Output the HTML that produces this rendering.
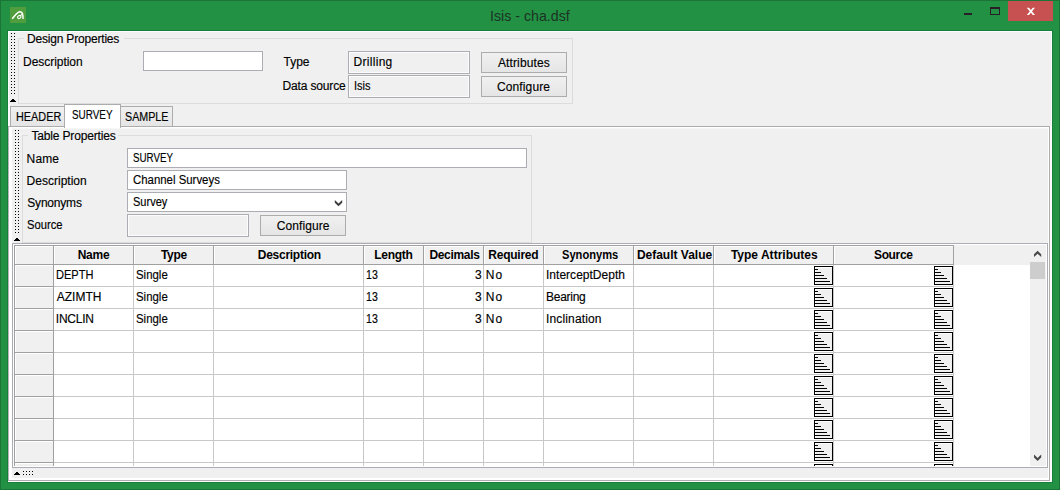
<!DOCTYPE html><html><head><meta charset="utf-8"><title>Isis - cha.dsf</title><style>
html,body{margin:0;padding:0;}
body{width:1060px;height:490px;overflow:hidden;background:#229143;position:relative;
 font-family:"Liberation Sans",sans-serif;font-size:12px;color:#000;}
div,span{position:absolute;box-sizing:border-box;}
.t{-webkit-text-stroke:0.15px #000;white-space:nowrap;line-height:14px;height:14px;font-size:12px;}
.b{font-weight:bold;}
.c{text-align:center;}
.r{text-align:right;}
.btn{border:1px solid #acacac;background:linear-gradient(#f2f2f2,#ebebeb 45%,#dddddd 55%,#cfcfcf);}
.btn2{border:1px solid #acacac;background:linear-gradient(#f0f0f0,#e5e5e5);}
.inp{border:1px solid #abadb3;background:#fff;}
.dis{border:1px solid #abadb3;background:#f0f0f0;box-shadow:inset 0 0 0 1px #fcfcfc;}
.ico{border:1px solid #000;background:#f0f0f0;width:19px;height:19px;box-shadow:inset 1px 1px 0 #fff;}
.ico i{position:absolute;left:0;height:1px;background:#000;display:block;}
</style></head><body>
<div style="left:0px;top:0px;width:1060px;height:490px;border:1px solid #1a7536;"></div>
<svg style="position:absolute;left:10px;top:7px" width="16" height="16" viewBox="0 0 16 16"><rect width="16" height="16" fill="#4f9d3c"/><path d="M2.6 11.3 C4.3 9 6.3 6.6 8.2 5.3 C9.5 4.6 11 4.7 12 5.7 C12.9 6.7 13 8.6 13.05 11.4" fill="none" stroke="#fff" stroke-width="1.45" stroke-linecap="round"/><ellipse cx="9.25" cy="10" rx="1.75" ry="1.4" transform="rotate(-25 9.25 10)" fill="none" stroke="#fff" stroke-width="1.15"/><path d="M10.7 9 C11.2 8.3 11.5 7.5 11.7 6.6" fill="none" stroke="#fff" stroke-width="1"/></svg>
<span class="t" style="left:489.75px;top:9px;transform:scaleX(0.9464);transform-origin:0 0;font-size:15px;color:#1c3325;-webkit-text-stroke:0;">Isis - cha.dsf</span>
<div style="left:964px;top:13px;width:8px;height:2px;background:#281e28;"></div>
<div style="left:990px;top:7px;width:10px;height:8px;border:1px solid #281e28;border-top-width:2px;"></div>
<div style="left:1008px;top:1px;width:45px;height:20px;background:#c75050;"></div>
<svg style="position:absolute;left:1026px;top:7px" width="10" height="9" viewBox="0 0 10 9"><path d="M0.8 0.8 L3 0.8 L9 8 L6.8 8 Z M6.8 0.8 L9 0.8 L3 8 L0.8 8 Z" fill="#fff"/></svg>
<div style="left:7px;top:30px;width:1046px;height:453px;background:#15803a;"></div>
<div style="left:8px;top:31px;width:1044px;height:451px;background:#f0f0f0;"></div>
<div style="left:8px;top:31px;width:1044px;height:1px;background:#fdfafd;"></div>
<div style="left:8px;top:31px;width:1px;height:95px;background:#fdfafd;"></div>
<div style="left:9px;top:104px;width:1px;height:22px;background:#fdfafd;"></div>
<div style="left:1051px;top:31px;width:1px;height:451px;background:#fdfafd;"></div>
<div style="left:1050px;top:126px;width:1px;height:356px;background:#fdfafd;"></div>
<div style="left:8px;top:481px;width:1044px;height:1px;background:#fdfafd;"></div>
<div style="left:11px;top:33px;width:1px;height:61px;background:repeating-linear-gradient(to bottom,#000 0,#000 1px,transparent 1px,transparent 3px);"></div>
<div style="left:14px;top:33px;width:1px;height:61px;background:repeating-linear-gradient(to bottom,#000 0,#000 1px,transparent 1px,transparent 3px);"></div>
<div style="left:12px;top:99px;width:2px;height:1px;background:#000;"></div>
<div style="left:11px;top:100px;width:4px;height:1px;background:#000;"></div>
<div style="left:10px;top:101px;width:6px;height:1px;background:#000;"></div>
<div style="left:18px;top:38px;width:555px;height:66px;border:1px solid #dcdcdc;"></div>
<div style="left:24px;top:37px;width:100px;height:3px;background:#f0f0f0;"></div>
<span class="t" style="left:27.0px;top:32px;letter-spacing:-0.19px;">Design Properties</span>
<span class="t" style="left:23.0px;top:55px;letter-spacing:-0.04px;">Description</span>
<div class="inp" style="left:143px;top:51px;width:120px;height:20px;"></div>
<span class="t" style="left:283.5px;top:55px;">Type</span>
<span class="t" style="left:282.5px;top:79px;letter-spacing:-0.15px;">Data source</span>
<div class="dis" style="left:348px;top:51px;width:122px;height:23px;"></div>
<div class="dis" style="left:348px;top:75px;width:122px;height:23px;"></div>
<span class="t" style="left:353.5px;top:55px;letter-spacing:0.3px;">Drilling</span>
<span class="t" style="left:353.59px;top:79px;transform:scaleX(0.9118);transform-origin:0 0;">Isis</span>
<div class="btn2" style="left:481px;top:52px;width:86px;height:21px;"></div>
<div class="btn2" style="left:481px;top:76px;width:86px;height:21px;"></div>
<span class="t" style="left:498.0px;top:56px;letter-spacing:0.11px;">Attributes</span>
<span class="t" style="left:497.0px;top:80px;letter-spacing:0.12px;">Configure</span>
<div style="left:8px;top:126px;width:1042px;height:355px;border:1px solid #acacac;border-left-color:#b9b4b9;background:#fff;"></div>
<div style="left:12px;top:128px;width:1036px;height:1px;background:#f7f7f7;"></div>
<div style="left:12px;top:129px;width:1036px;height:349px;background:#f0f0f0;"></div>
<div style="left:10px;top:106px;width:55px;height:20px;border:1px solid #acacac;border-bottom:none;background:linear-gradient(#f0f0f0,#e5e5e5);"></div>
<div style="left:120px;top:106px;width:53px;height:20px;border:1px solid #acacac;border-bottom:none;border-left:none;background:linear-gradient(#f0f0f0,#e5e5e5);"></div>
<div style="left:64px;top:104px;width:57px;height:24px;border:1px solid #acacac;border-bottom:none;background:#fff;"></div>
<span class="t" style="left:15.5px;top:110px;transform:scaleX(0.9042);transform-origin:0 0;">HEADER</span>
<span class="t" style="left:72.3px;top:108px;transform:scaleX(0.8245);transform-origin:0 0;">SURVEY</span>
<span class="t" style="left:125.2px;top:110px;transform:scaleX(0.8918);transform-origin:0 0;">SAMPLE</span>
<div style="left:15px;top:130px;width:1px;height:103px;background:repeating-linear-gradient(to bottom,#000 0,#000 1px,transparent 1px,transparent 3px);"></div>
<div style="left:18px;top:130px;width:1px;height:103px;background:repeating-linear-gradient(to bottom,#000 0,#000 1px,transparent 1px,transparent 3px);"></div>
<div style="left:16px;top:238px;width:2px;height:1px;background:#000;"></div>
<div style="left:15px;top:239px;width:4px;height:1px;background:#000;"></div>
<div style="left:14px;top:240px;width:6px;height:1px;background:#000;"></div>
<div style="left:22px;top:135px;width:510px;height:108px;border:1px solid #dcdcdc;"></div>
<div style="left:28px;top:134px;width:90px;height:3px;background:#f0f0f0;"></div>
<span class="t" style="left:31.4px;top:129px;letter-spacing:-0.16px;">Table Properties</span>
<span class="t" style="left:26.6px;top:152px;letter-spacing:0.13px;">Name</span>
<span class="t" style="left:26.6px;top:174px;letter-spacing:0.01px;">Description</span>
<span class="t" style="left:27.3px;top:196px;letter-spacing:-0.2px;">Synonyms</span>
<span class="t" style="left:27.3px;top:218px;transform:scaleX(0.9368);transform-origin:0 0;">Source</span>
<div class="inp" style="left:127px;top:148px;width:400px;height:20px;"></div>
<div class="inp" style="left:127px;top:170px;width:220px;height:20px;"></div>
<div class="inp" style="left:127px;top:192px;width:220px;height:20px;"></div>
<div class="dis" style="left:127px;top:214px;width:122px;height:23px;"></div>
<span class="t" style="left:133.1px;top:151px;transform:scaleX(0.8163);transform-origin:0 0;">SURVEY</span>
<span class="t" style="left:133.1px;top:173px;transform:scaleX(0.9505);transform-origin:0 0;">Channel Surveys</span>
<span class="t" style="left:133.1px;top:195px;transform:scaleX(0.9189);transform-origin:0 0;">Survey</span>
<svg style="position:absolute;left:334px;top:199px" width="10" height="8" viewBox="0 0 10 8"><path d="M0.8 1 L4.5 4.4 L8.2 1 L8.2 3.7 L4.5 7.3 L0.8 3.7 Z" fill="#3c3c3c"/></svg>
<div class="btn2" style="left:260px;top:215px;width:86px;height:21px;"></div>
<span class="t" style="left:276.8px;top:219px;letter-spacing:0.07px;">Configure</span>
<div style="left:12px;top:243px;width:1036px;height:225px;border:1px solid #abadb3;background:#fff;overflow:hidden;"></div>
<div style="left:0;top:0;width:1060px;height:466px;overflow:hidden;">
<div style="left:14px;top:245px;width:1016px;height:20px;background:#f0f0f0;"></div>
<div style="left:14px;top:245px;width:40px;height:222px;background:#f0f0f0;"></div>
<div style="left:14px;top:245px;width:40px;height:20px;border:1px solid #a0a0a0;box-shadow:inset 1px 1px 0 #fff;"></div>
<div style="left:53px;top:245px;width:81px;height:20px;border:1px solid #a0a0a0;box-shadow:inset 1px 1px 0 #fff;"></div>
<span class="t" style="left:77.7px;top:248px;letter-spacing:-0.23px;font-weight:bold;-webkit-text-stroke:0;">Name</span>
<div style="left:133px;top:245px;width:81px;height:20px;border:1px solid #a0a0a0;box-shadow:inset 1px 1px 0 #fff;"></div>
<span class="t" style="left:160.9px;top:248px;letter-spacing:-0.27px;font-weight:bold;-webkit-text-stroke:0;">Type</span>
<div style="left:213px;top:245px;width:151px;height:20px;border:1px solid #a0a0a0;box-shadow:inset 1px 1px 0 #fff;"></div>
<span class="t" style="left:257.8px;top:248px;letter-spacing:-0.27px;font-weight:bold;-webkit-text-stroke:0;">Description</span>
<div style="left:363px;top:245px;width:61px;height:20px;border:1px solid #a0a0a0;box-shadow:inset 1px 1px 0 #fff;"></div>
<span class="t" style="left:374.3px;top:248px;letter-spacing:-0.3px;font-weight:bold;-webkit-text-stroke:0;">Length</span>
<div style="left:423px;top:245px;width:61px;height:20px;border:1px solid #a0a0a0;box-shadow:inset 1px 1px 0 #fff;"></div>
<span class="t" style="left:429.4px;top:248px;letter-spacing:-0.31px;font-weight:bold;-webkit-text-stroke:0;">Decimals</span>
<div style="left:483px;top:245px;width:61px;height:20px;border:1px solid #a0a0a0;box-shadow:inset 1px 1px 0 #fff;"></div>
<span class="t" style="left:488.3px;top:248px;letter-spacing:-0.24px;font-weight:bold;-webkit-text-stroke:0;">Required</span>
<div style="left:543px;top:245px;width:91px;height:20px;border:1px solid #a0a0a0;box-shadow:inset 1px 1px 0 #fff;"></div>
<span class="t" style="left:561.5px;top:248px;transform:scaleX(0.9267);transform-origin:0 0;font-weight:bold;-webkit-text-stroke:0;">Synonyms</span>
<div style="left:633px;top:245px;width:81px;height:20px;border:1px solid #a0a0a0;box-shadow:inset 1px 1px 0 #fff;"></div>
<span class="t" style="left:636.9px;top:248px;letter-spacing:-0.01px;font-weight:bold;-webkit-text-stroke:0;">Default Value</span>
<div style="left:713px;top:245px;width:121px;height:20px;border:1px solid #a0a0a0;box-shadow:inset 1px 1px 0 #fff;"></div>
<span class="t" style="left:730.9px;top:248px;letter-spacing:0.01px;font-weight:bold;-webkit-text-stroke:0;">Type Attributes</span>
<div style="left:833px;top:245px;width:121px;height:20px;border:1px solid #a0a0a0;box-shadow:inset 1px 1px 0 #fff;"></div>
<span class="t" style="left:874.0px;top:248px;letter-spacing:-0.36px;font-weight:bold;-webkit-text-stroke:0;">Source</span>
<div style="left:53px;top:264px;width:81px;height:23px;border:1px solid #c8c8c8;border-left-color:#c8c8c8;"></div>
<div style="left:133px;top:264px;width:81px;height:23px;border:1px solid #c8c8c8;border-left-color:#c8c8c8;"></div>
<div style="left:213px;top:264px;width:151px;height:23px;border:1px solid #c8c8c8;border-left-color:#c8c8c8;"></div>
<div style="left:363px;top:264px;width:61px;height:23px;border:1px solid #c8c8c8;border-left-color:#c8c8c8;"></div>
<div style="left:423px;top:264px;width:61px;height:23px;border:1px solid #c8c8c8;border-left-color:#c8c8c8;"></div>
<div style="left:483px;top:264px;width:61px;height:23px;border:1px solid #c8c8c8;border-left-color:#c8c8c8;"></div>
<div style="left:543px;top:264px;width:91px;height:23px;border:1px solid #c8c8c8;border-left-color:#c8c8c8;"></div>
<div style="left:633px;top:264px;width:81px;height:23px;border:1px solid #c8c8c8;border-left-color:#c8c8c8;"></div>
<div style="left:713px;top:264px;width:121px;height:23px;border:1px solid #c8c8c8;border-left-color:#c8c8c8;"></div>
<div style="left:833px;top:264px;width:121px;height:23px;border:1px solid #c8c8c8;border-left-color:#c8c8c8;"></div>
<div style="left:14px;top:264px;width:40px;height:23px;border:1px solid #a0a0a0;box-shadow:inset 1px 1px 0 #fff;"></div>
<div class="ico" style="left:814px;top:266px;"><i style="top:2px;width:3px"></i><i style="top:5px;width:6px"></i><i style="top:8px;width:9px"></i><i style="top:11px;width:12px"></i><i style="top:14px;width:15px"></i></div>
<div class="ico" style="left:934px;top:266px;"><i style="top:2px;width:3px"></i><i style="top:5px;width:6px"></i><i style="top:8px;width:9px"></i><i style="top:11px;width:12px"></i><i style="top:14px;width:15px"></i></div>
<span class="t" style="left:55.88px;top:268px;transform:scaleX(0.9205);transform-origin:0 0;">DEPTH</span>
<span class="t" style="left:136.3px;top:268px;transform:scaleX(0.9515);transform-origin:0 0;">Single</span>
<span class="t" style="left:366.42px;top:268px;transform:scaleX(0.8833);transform-origin:0 0;">13</span>
<span class="t" style="left:475.0px;top:268px;">3</span>
<span class="t" style="left:485.8px;top:268px;letter-spacing:1.1px;">No</span>
<span class="t" style="left:546.0px;top:268px;letter-spacing:0.02px;">InterceptDepth</span>
<div style="left:53px;top:286px;width:81px;height:23px;border:1px solid #c8c8c8;border-left-color:#c8c8c8;"></div>
<div style="left:133px;top:286px;width:81px;height:23px;border:1px solid #c8c8c8;border-left-color:#c8c8c8;"></div>
<div style="left:213px;top:286px;width:151px;height:23px;border:1px solid #c8c8c8;border-left-color:#c8c8c8;"></div>
<div style="left:363px;top:286px;width:61px;height:23px;border:1px solid #c8c8c8;border-left-color:#c8c8c8;"></div>
<div style="left:423px;top:286px;width:61px;height:23px;border:1px solid #c8c8c8;border-left-color:#c8c8c8;"></div>
<div style="left:483px;top:286px;width:61px;height:23px;border:1px solid #c8c8c8;border-left-color:#c8c8c8;"></div>
<div style="left:543px;top:286px;width:91px;height:23px;border:1px solid #c8c8c8;border-left-color:#c8c8c8;"></div>
<div style="left:633px;top:286px;width:81px;height:23px;border:1px solid #c8c8c8;border-left-color:#c8c8c8;"></div>
<div style="left:713px;top:286px;width:121px;height:23px;border:1px solid #c8c8c8;border-left-color:#c8c8c8;"></div>
<div style="left:833px;top:286px;width:121px;height:23px;border:1px solid #c8c8c8;border-left-color:#c8c8c8;"></div>
<div style="left:14px;top:286px;width:40px;height:23px;border:1px solid #a0a0a0;box-shadow:inset 1px 1px 0 #fff;"></div>
<div class="ico" style="left:814px;top:288px;"><i style="top:2px;width:3px"></i><i style="top:5px;width:6px"></i><i style="top:8px;width:9px"></i><i style="top:11px;width:12px"></i><i style="top:14px;width:15px"></i></div>
<div class="ico" style="left:934px;top:288px;"><i style="top:2px;width:3px"></i><i style="top:5px;width:6px"></i><i style="top:8px;width:9px"></i><i style="top:11px;width:12px"></i><i style="top:14px;width:15px"></i></div>
<span class="t" style="left:56.8px;top:290px;letter-spacing:-0.02px;">AZIMTH</span>
<span class="t" style="left:136.3px;top:290px;transform:scaleX(0.9515);transform-origin:0 0;">Single</span>
<span class="t" style="left:366.42px;top:290px;transform:scaleX(0.8833);transform-origin:0 0;">13</span>
<span class="t" style="left:475.0px;top:290px;">3</span>
<span class="t" style="left:485.8px;top:290px;letter-spacing:1.1px;">No</span>
<span class="t" style="left:546.0px;top:290px;letter-spacing:-0.27px;">Bearing</span>
<div style="left:53px;top:308px;width:81px;height:23px;border:1px solid #c8c8c8;border-left-color:#c8c8c8;"></div>
<div style="left:133px;top:308px;width:81px;height:23px;border:1px solid #c8c8c8;border-left-color:#c8c8c8;"></div>
<div style="left:213px;top:308px;width:151px;height:23px;border:1px solid #c8c8c8;border-left-color:#c8c8c8;"></div>
<div style="left:363px;top:308px;width:61px;height:23px;border:1px solid #c8c8c8;border-left-color:#c8c8c8;"></div>
<div style="left:423px;top:308px;width:61px;height:23px;border:1px solid #c8c8c8;border-left-color:#c8c8c8;"></div>
<div style="left:483px;top:308px;width:61px;height:23px;border:1px solid #c8c8c8;border-left-color:#c8c8c8;"></div>
<div style="left:543px;top:308px;width:91px;height:23px;border:1px solid #c8c8c8;border-left-color:#c8c8c8;"></div>
<div style="left:633px;top:308px;width:81px;height:23px;border:1px solid #c8c8c8;border-left-color:#c8c8c8;"></div>
<div style="left:713px;top:308px;width:121px;height:23px;border:1px solid #c8c8c8;border-left-color:#c8c8c8;"></div>
<div style="left:833px;top:308px;width:121px;height:23px;border:1px solid #c8c8c8;border-left-color:#c8c8c8;"></div>
<div style="left:14px;top:308px;width:40px;height:23px;border:1px solid #a0a0a0;box-shadow:inset 1px 1px 0 #fff;"></div>
<div class="ico" style="left:814px;top:310px;"><i style="top:2px;width:3px"></i><i style="top:5px;width:6px"></i><i style="top:8px;width:9px"></i><i style="top:11px;width:12px"></i><i style="top:14px;width:15px"></i></div>
<div class="ico" style="left:934px;top:310px;"><i style="top:2px;width:3px"></i><i style="top:5px;width:6px"></i><i style="top:8px;width:9px"></i><i style="top:11px;width:12px"></i><i style="top:14px;width:15px"></i></div>
<span class="t" style="left:55.8px;top:312px;letter-spacing:-0.24px;">INCLIN</span>
<span class="t" style="left:136.3px;top:312px;transform:scaleX(0.9515);transform-origin:0 0;">Single</span>
<span class="t" style="left:366.42px;top:312px;transform:scaleX(0.8833);transform-origin:0 0;">13</span>
<span class="t" style="left:475.0px;top:312px;">3</span>
<span class="t" style="left:485.8px;top:312px;letter-spacing:1.1px;">No</span>
<span class="t" style="left:546.0px;top:312px;letter-spacing:0.15px;">Inclination</span>
<div style="left:53px;top:330px;width:81px;height:23px;border:1px solid #c8c8c8;border-left-color:#c8c8c8;"></div>
<div style="left:133px;top:330px;width:81px;height:23px;border:1px solid #c8c8c8;border-left-color:#c8c8c8;"></div>
<div style="left:213px;top:330px;width:151px;height:23px;border:1px solid #c8c8c8;border-left-color:#c8c8c8;"></div>
<div style="left:363px;top:330px;width:61px;height:23px;border:1px solid #c8c8c8;border-left-color:#c8c8c8;"></div>
<div style="left:423px;top:330px;width:61px;height:23px;border:1px solid #c8c8c8;border-left-color:#c8c8c8;"></div>
<div style="left:483px;top:330px;width:61px;height:23px;border:1px solid #c8c8c8;border-left-color:#c8c8c8;"></div>
<div style="left:543px;top:330px;width:91px;height:23px;border:1px solid #c8c8c8;border-left-color:#c8c8c8;"></div>
<div style="left:633px;top:330px;width:81px;height:23px;border:1px solid #c8c8c8;border-left-color:#c8c8c8;"></div>
<div style="left:713px;top:330px;width:121px;height:23px;border:1px solid #c8c8c8;border-left-color:#c8c8c8;"></div>
<div style="left:833px;top:330px;width:121px;height:23px;border:1px solid #c8c8c8;border-left-color:#c8c8c8;"></div>
<div style="left:14px;top:330px;width:40px;height:23px;border:1px solid #a0a0a0;box-shadow:inset 1px 1px 0 #fff;"></div>
<div class="ico" style="left:814px;top:332px;"><i style="top:2px;width:3px"></i><i style="top:5px;width:6px"></i><i style="top:8px;width:9px"></i><i style="top:11px;width:12px"></i><i style="top:14px;width:15px"></i></div>
<div class="ico" style="left:934px;top:332px;"><i style="top:2px;width:3px"></i><i style="top:5px;width:6px"></i><i style="top:8px;width:9px"></i><i style="top:11px;width:12px"></i><i style="top:14px;width:15px"></i></div>
<div style="left:53px;top:352px;width:81px;height:23px;border:1px solid #c8c8c8;border-left-color:#c8c8c8;"></div>
<div style="left:133px;top:352px;width:81px;height:23px;border:1px solid #c8c8c8;border-left-color:#c8c8c8;"></div>
<div style="left:213px;top:352px;width:151px;height:23px;border:1px solid #c8c8c8;border-left-color:#c8c8c8;"></div>
<div style="left:363px;top:352px;width:61px;height:23px;border:1px solid #c8c8c8;border-left-color:#c8c8c8;"></div>
<div style="left:423px;top:352px;width:61px;height:23px;border:1px solid #c8c8c8;border-left-color:#c8c8c8;"></div>
<div style="left:483px;top:352px;width:61px;height:23px;border:1px solid #c8c8c8;border-left-color:#c8c8c8;"></div>
<div style="left:543px;top:352px;width:91px;height:23px;border:1px solid #c8c8c8;border-left-color:#c8c8c8;"></div>
<div style="left:633px;top:352px;width:81px;height:23px;border:1px solid #c8c8c8;border-left-color:#c8c8c8;"></div>
<div style="left:713px;top:352px;width:121px;height:23px;border:1px solid #c8c8c8;border-left-color:#c8c8c8;"></div>
<div style="left:833px;top:352px;width:121px;height:23px;border:1px solid #c8c8c8;border-left-color:#c8c8c8;"></div>
<div style="left:14px;top:352px;width:40px;height:23px;border:1px solid #a0a0a0;box-shadow:inset 1px 1px 0 #fff;"></div>
<div class="ico" style="left:814px;top:354px;"><i style="top:2px;width:3px"></i><i style="top:5px;width:6px"></i><i style="top:8px;width:9px"></i><i style="top:11px;width:12px"></i><i style="top:14px;width:15px"></i></div>
<div class="ico" style="left:934px;top:354px;"><i style="top:2px;width:3px"></i><i style="top:5px;width:6px"></i><i style="top:8px;width:9px"></i><i style="top:11px;width:12px"></i><i style="top:14px;width:15px"></i></div>
<div style="left:53px;top:374px;width:81px;height:23px;border:1px solid #c8c8c8;border-left-color:#c8c8c8;"></div>
<div style="left:133px;top:374px;width:81px;height:23px;border:1px solid #c8c8c8;border-left-color:#c8c8c8;"></div>
<div style="left:213px;top:374px;width:151px;height:23px;border:1px solid #c8c8c8;border-left-color:#c8c8c8;"></div>
<div style="left:363px;top:374px;width:61px;height:23px;border:1px solid #c8c8c8;border-left-color:#c8c8c8;"></div>
<div style="left:423px;top:374px;width:61px;height:23px;border:1px solid #c8c8c8;border-left-color:#c8c8c8;"></div>
<div style="left:483px;top:374px;width:61px;height:23px;border:1px solid #c8c8c8;border-left-color:#c8c8c8;"></div>
<div style="left:543px;top:374px;width:91px;height:23px;border:1px solid #c8c8c8;border-left-color:#c8c8c8;"></div>
<div style="left:633px;top:374px;width:81px;height:23px;border:1px solid #c8c8c8;border-left-color:#c8c8c8;"></div>
<div style="left:713px;top:374px;width:121px;height:23px;border:1px solid #c8c8c8;border-left-color:#c8c8c8;"></div>
<div style="left:833px;top:374px;width:121px;height:23px;border:1px solid #c8c8c8;border-left-color:#c8c8c8;"></div>
<div style="left:14px;top:374px;width:40px;height:23px;border:1px solid #a0a0a0;box-shadow:inset 1px 1px 0 #fff;"></div>
<div class="ico" style="left:814px;top:376px;"><i style="top:2px;width:3px"></i><i style="top:5px;width:6px"></i><i style="top:8px;width:9px"></i><i style="top:11px;width:12px"></i><i style="top:14px;width:15px"></i></div>
<div class="ico" style="left:934px;top:376px;"><i style="top:2px;width:3px"></i><i style="top:5px;width:6px"></i><i style="top:8px;width:9px"></i><i style="top:11px;width:12px"></i><i style="top:14px;width:15px"></i></div>
<div style="left:53px;top:396px;width:81px;height:23px;border:1px solid #c8c8c8;border-left-color:#c8c8c8;"></div>
<div style="left:133px;top:396px;width:81px;height:23px;border:1px solid #c8c8c8;border-left-color:#c8c8c8;"></div>
<div style="left:213px;top:396px;width:151px;height:23px;border:1px solid #c8c8c8;border-left-color:#c8c8c8;"></div>
<div style="left:363px;top:396px;width:61px;height:23px;border:1px solid #c8c8c8;border-left-color:#c8c8c8;"></div>
<div style="left:423px;top:396px;width:61px;height:23px;border:1px solid #c8c8c8;border-left-color:#c8c8c8;"></div>
<div style="left:483px;top:396px;width:61px;height:23px;border:1px solid #c8c8c8;border-left-color:#c8c8c8;"></div>
<div style="left:543px;top:396px;width:91px;height:23px;border:1px solid #c8c8c8;border-left-color:#c8c8c8;"></div>
<div style="left:633px;top:396px;width:81px;height:23px;border:1px solid #c8c8c8;border-left-color:#c8c8c8;"></div>
<div style="left:713px;top:396px;width:121px;height:23px;border:1px solid #c8c8c8;border-left-color:#c8c8c8;"></div>
<div style="left:833px;top:396px;width:121px;height:23px;border:1px solid #c8c8c8;border-left-color:#c8c8c8;"></div>
<div style="left:14px;top:396px;width:40px;height:23px;border:1px solid #a0a0a0;box-shadow:inset 1px 1px 0 #fff;"></div>
<div class="ico" style="left:814px;top:398px;"><i style="top:2px;width:3px"></i><i style="top:5px;width:6px"></i><i style="top:8px;width:9px"></i><i style="top:11px;width:12px"></i><i style="top:14px;width:15px"></i></div>
<div class="ico" style="left:934px;top:398px;"><i style="top:2px;width:3px"></i><i style="top:5px;width:6px"></i><i style="top:8px;width:9px"></i><i style="top:11px;width:12px"></i><i style="top:14px;width:15px"></i></div>
<div style="left:53px;top:418px;width:81px;height:23px;border:1px solid #c8c8c8;border-left-color:#c8c8c8;"></div>
<div style="left:133px;top:418px;width:81px;height:23px;border:1px solid #c8c8c8;border-left-color:#c8c8c8;"></div>
<div style="left:213px;top:418px;width:151px;height:23px;border:1px solid #c8c8c8;border-left-color:#c8c8c8;"></div>
<div style="left:363px;top:418px;width:61px;height:23px;border:1px solid #c8c8c8;border-left-color:#c8c8c8;"></div>
<div style="left:423px;top:418px;width:61px;height:23px;border:1px solid #c8c8c8;border-left-color:#c8c8c8;"></div>
<div style="left:483px;top:418px;width:61px;height:23px;border:1px solid #c8c8c8;border-left-color:#c8c8c8;"></div>
<div style="left:543px;top:418px;width:91px;height:23px;border:1px solid #c8c8c8;border-left-color:#c8c8c8;"></div>
<div style="left:633px;top:418px;width:81px;height:23px;border:1px solid #c8c8c8;border-left-color:#c8c8c8;"></div>
<div style="left:713px;top:418px;width:121px;height:23px;border:1px solid #c8c8c8;border-left-color:#c8c8c8;"></div>
<div style="left:833px;top:418px;width:121px;height:23px;border:1px solid #c8c8c8;border-left-color:#c8c8c8;"></div>
<div style="left:14px;top:418px;width:40px;height:23px;border:1px solid #a0a0a0;box-shadow:inset 1px 1px 0 #fff;"></div>
<div class="ico" style="left:814px;top:420px;"><i style="top:2px;width:3px"></i><i style="top:5px;width:6px"></i><i style="top:8px;width:9px"></i><i style="top:11px;width:12px"></i><i style="top:14px;width:15px"></i></div>
<div class="ico" style="left:934px;top:420px;"><i style="top:2px;width:3px"></i><i style="top:5px;width:6px"></i><i style="top:8px;width:9px"></i><i style="top:11px;width:12px"></i><i style="top:14px;width:15px"></i></div>
<div style="left:53px;top:440px;width:81px;height:23px;border:1px solid #c8c8c8;border-left-color:#c8c8c8;"></div>
<div style="left:133px;top:440px;width:81px;height:23px;border:1px solid #c8c8c8;border-left-color:#c8c8c8;"></div>
<div style="left:213px;top:440px;width:151px;height:23px;border:1px solid #c8c8c8;border-left-color:#c8c8c8;"></div>
<div style="left:363px;top:440px;width:61px;height:23px;border:1px solid #c8c8c8;border-left-color:#c8c8c8;"></div>
<div style="left:423px;top:440px;width:61px;height:23px;border:1px solid #c8c8c8;border-left-color:#c8c8c8;"></div>
<div style="left:483px;top:440px;width:61px;height:23px;border:1px solid #c8c8c8;border-left-color:#c8c8c8;"></div>
<div style="left:543px;top:440px;width:91px;height:23px;border:1px solid #c8c8c8;border-left-color:#c8c8c8;"></div>
<div style="left:633px;top:440px;width:81px;height:23px;border:1px solid #c8c8c8;border-left-color:#c8c8c8;"></div>
<div style="left:713px;top:440px;width:121px;height:23px;border:1px solid #c8c8c8;border-left-color:#c8c8c8;"></div>
<div style="left:833px;top:440px;width:121px;height:23px;border:1px solid #c8c8c8;border-left-color:#c8c8c8;"></div>
<div style="left:14px;top:440px;width:40px;height:23px;border:1px solid #a0a0a0;box-shadow:inset 1px 1px 0 #fff;"></div>
<div class="ico" style="left:814px;top:442px;"><i style="top:2px;width:3px"></i><i style="top:5px;width:6px"></i><i style="top:8px;width:9px"></i><i style="top:11px;width:12px"></i><i style="top:14px;width:15px"></i></div>
<div class="ico" style="left:934px;top:442px;"><i style="top:2px;width:3px"></i><i style="top:5px;width:6px"></i><i style="top:8px;width:9px"></i><i style="top:11px;width:12px"></i><i style="top:14px;width:15px"></i></div>
<div style="left:53px;top:462px;width:81px;height:23px;border:1px solid #c8c8c8;border-left-color:#c8c8c8;"></div>
<div style="left:133px;top:462px;width:81px;height:23px;border:1px solid #c8c8c8;border-left-color:#c8c8c8;"></div>
<div style="left:213px;top:462px;width:151px;height:23px;border:1px solid #c8c8c8;border-left-color:#c8c8c8;"></div>
<div style="left:363px;top:462px;width:61px;height:23px;border:1px solid #c8c8c8;border-left-color:#c8c8c8;"></div>
<div style="left:423px;top:462px;width:61px;height:23px;border:1px solid #c8c8c8;border-left-color:#c8c8c8;"></div>
<div style="left:483px;top:462px;width:61px;height:23px;border:1px solid #c8c8c8;border-left-color:#c8c8c8;"></div>
<div style="left:543px;top:462px;width:91px;height:23px;border:1px solid #c8c8c8;border-left-color:#c8c8c8;"></div>
<div style="left:633px;top:462px;width:81px;height:23px;border:1px solid #c8c8c8;border-left-color:#c8c8c8;"></div>
<div style="left:713px;top:462px;width:121px;height:23px;border:1px solid #c8c8c8;border-left-color:#c8c8c8;"></div>
<div style="left:833px;top:462px;width:121px;height:23px;border:1px solid #c8c8c8;border-left-color:#c8c8c8;"></div>
<div style="left:14px;top:462px;width:40px;height:23px;border:1px solid #a0a0a0;box-shadow:inset 1px 1px 0 #fff;"></div>
<div class="ico" style="left:814px;top:464px;"><i style="top:2px;width:3px"></i><i style="top:5px;width:6px"></i><i style="top:8px;width:9px"></i><i style="top:11px;width:12px"></i><i style="top:14px;width:15px"></i></div>
<div class="ico" style="left:934px;top:464px;"><i style="top:2px;width:3px"></i><i style="top:5px;width:6px"></i><i style="top:8px;width:9px"></i><i style="top:11px;width:12px"></i><i style="top:14px;width:15px"></i></div>
<div style="left:14px;top:264px;width:940px;height:1px;background:#a0a0a0;"></div>
</div>
<div style="left:1030px;top:245px;width:16px;height:221px;background:#f0f0f0;"></div>
<div style="left:1030px;top:262px;width:15px;height:17px;background:#cdcdcd;"></div>
<svg style="position:absolute;left:1033px;top:250px" width="10" height="8" viewBox="0 0 10 8"><path d="M1 7.1 L1 4.3 L4.6 0.7 L8.2 4.3 L8.2 7.1 L4.6 3.7 Z" fill="#484848"/></svg>
<svg style="position:absolute;left:1033px;top:454px" width="10" height="8" viewBox="0 0 10 8"><path d="M1 0.6 L1 3.4 L4.6 7 L8.2 3.4 L8.2 0.6 L4.6 4 Z" fill="#484848"/></svg>
<div style="left:16px;top:472px;width:2px;height:1px;background:#000;"></div>
<div style="left:15px;top:473px;width:4px;height:1px;background:#000;"></div>
<div style="left:14px;top:474px;width:6px;height:1px;background:#000;"></div>
<div style="left:23px;top:471px;width:1px;height:1px;background:#000;"></div>
<div style="left:23px;top:474px;width:1px;height:1px;background:#000;"></div>
<div style="left:26px;top:471px;width:1px;height:1px;background:#000;"></div>
<div style="left:26px;top:474px;width:1px;height:1px;background:#000;"></div>
<div style="left:29px;top:471px;width:1px;height:1px;background:#000;"></div>
<div style="left:29px;top:474px;width:1px;height:1px;background:#000;"></div>
<div style="left:32px;top:471px;width:1px;height:1px;background:#000;"></div>
<div style="left:32px;top:474px;width:1px;height:1px;background:#000;"></div>
</body></html>
